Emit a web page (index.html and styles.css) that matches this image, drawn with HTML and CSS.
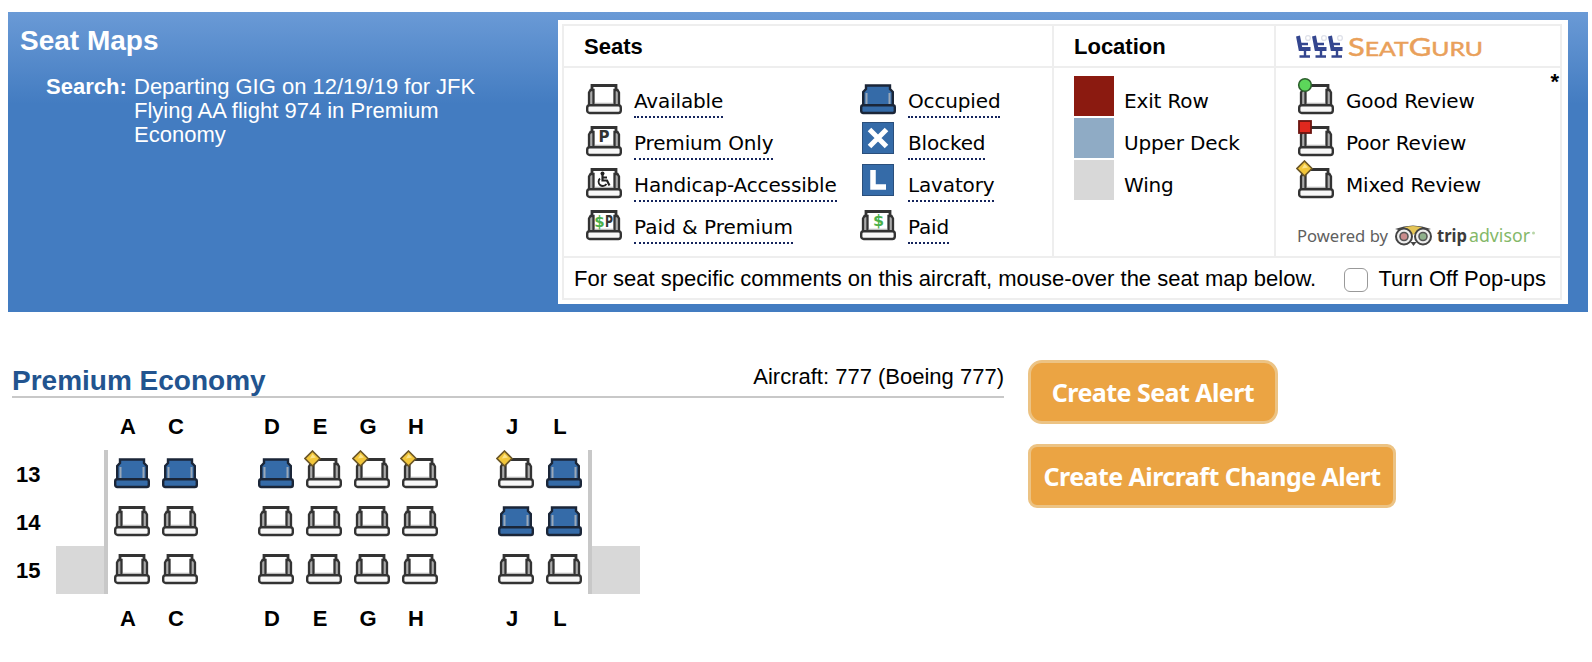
FILE: index.html
```
<!DOCTYPE html>
<html lang="en">
<head>
    <meta charset="utf-8">
    <title>Seat Maps</title>
    <link rel="stylesheet" href="styles.css">
</head>
<body>
    <!-- seat icons -->
    <svg class="sprite">
        <symbol id="seat" viewBox="0 0 40 40">
            <path d="M8 15V9.5H32V15" fill="#fff" stroke="#333" stroke-width="2.8"/>
            <rect x="10" y="11" width="20" height="19" fill="#fff"/>
            <path d="M11 27.5H29" stroke="#bbb" stroke-width="1.6"/>
            <path d="M5 30V16.5L6.500 14H9.500V28M35 30V16.500L33.500 14H30.500V28" fill="#aaa" stroke="#333" stroke-width="2.300"/>
            <rect x="3.200" y="29.200" width="33.600" height="7.800" rx="2.500" fill="#f8f8f8" stroke="#333" stroke-width="2.400"/>
        </symbol>
        <symbol id="seat-taken" viewBox="0 0 40 40">
            <path d="M5.200 30V16L8 13V9.500H32V13L34.800 16V30Z" fill="#356ba8" stroke="#1b2638" stroke-width="2.400"/>
            <path d="M8.500 17V28M31.500 17V28" stroke="#9aa8b8" stroke-width="2"/>
            <rect x="3.200" y="29.200" width="33.600" height="7.800" rx="2" fill="#356ba8" stroke="#1b2638" stroke-width="2.400"/>
        </symbol>
        <symbol id="seat-mixed" viewBox="0 0 40 40">
            <use href="#seat"/>
            <path d="M8.500 1L16 8.500L8.500 16L1 8.500Z" fill="#f2c63a" stroke="#6b5626" stroke-width="1.600"/>
            <path d="M8.500 4L12 7.500L6 8.500Z" fill="#fbe48a"/>
        </symbol>
        <symbol id="chair" viewBox="0 0 16 24">
            <path d="M2 1L4.500 14H14.500" fill="none" stroke="#34468f" stroke-width="4"/>
            <path d="M5 9H12M9 15V22M3.500 21.500H14" fill="none" stroke="#34468f" stroke-width="2.400"/>
            <circle cx="12" cy="3" r="2.400" fill="none" stroke="#e0e2ea" stroke-width="1.400"/>
        </symbol>
    </svg>

    <div class="header">
        <div class="search">
            <h1>Seat Maps</h1>
            <div class="search-row">
                <b>Search:</b>
                <p>Departing GIG on 12/19/19 for JFK Flying AA flight 974 in Premium Economy</p>
            </div>
        </div>

        <div class="legend">
            <div class="legend-grid">
                <div class="legend-head">Seats</div>
                <div class="legend-head">Location</div>
                <div class="legend-head legend-logo">
                    <svg width="196" height="38" viewBox="0 0 196 38">
                        <use href="#chair" x="0" y="7" width="16" height="24"/>
                        <use href="#chair" x="16" y="7" width="16" height="24"/>
                        <use href="#chair" x="32" y="7" width="16" height="24"/>
                        <text class="guru" x="52" y="28" textLength="135" lengthAdjust="spacingAndGlyphs"><tspan class="guru-cap">S</tspan>EAT<tspan class="guru-cap">G</tspan>URU</text>
                    </svg>
                </div>

                <div class="legend-cell seats">
                    <div class="seats-left">
                        <div class="item"><svg class="icon"><use href="#seat"/></svg><span class="label tip">Available</span></div>
                        <div class="item">
                            <svg class="icon" viewBox="0 0 40 40"><use href="#seat"/><text class="glyph" x="20" y="24" font-size="15">P</text></svg>
                            <span class="label tip">Premium Only</span>
                        </div>
                        <div class="item">
                            <svg class="icon" viewBox="0 0 40 40">
                                <use href="#seat"/>
                                <circle cx="18.500" cy="13.500" r="2" fill="#222"/>
                                <path d="M18.500 15V20.500H23L25.500 25.500M18.500 17.500H23" fill="none" stroke="#222" stroke-width="2.200"/>
                                <path d="M16 18.500A4.300 4.300 0 1 0 22.500 24" fill="none" stroke="#222" stroke-width="1.800"/>
                            </svg>
                            <span class="label tip">Handicap-Accessible</span>
                        </div>
                        <div class="item">
                            <svg class="icon" viewBox="0 0 40 40"><use href="#seat"/><text class="glyph paid" x="15.500" y="25" font-size="15">$</text><text class="glyph" x="25" y="25" font-size="15" textLength="8" lengthAdjust="spacingAndGlyphs">P</text></svg>
                            <span class="label tip wide">Paid &amp; Premium</span>
                        </div>
                    </div>
                    <div class="seats-right">
                        <div class="item"><svg class="icon"><use href="#seat-taken"/></svg><span class="label tip">Occupied</span></div>
                        <div class="item">
                            <svg class="icon" viewBox="0 0 40 40"><rect class="tile" x="4.500" y="4.500" width="31" height="31"/><path d="M11.500 11.500L28.500 28.500M28.500 11.500L11.500 28.500" stroke="#fff" stroke-width="5"/></svg>
                            <span class="label tip">Blocked</span>
                        </div>
                        <div class="item">
                            <svg class="icon" viewBox="0 0 40 40"><rect class="tile" x="4.500" y="4.500" width="31" height="31"/><path d="M15 10V27H28" fill="none" stroke="#fff" stroke-width="5.500"/></svg>
                            <span class="label tip">Lavatory</span>
                        </div>
                        <div class="item">
                            <svg class="icon" viewBox="0 0 40 40"><use href="#seat"/><text class="glyph paid" x="20.500" y="24" font-size="16">$</text></svg>
                            <span class="label tip">Paid</span>
                        </div>
                    </div>
                </div>

                <div class="legend-cell location">
                    <div class="item"><span class="swatch exit"></span><span class="label">Exit Row</span></div>
                    <div class="item"><span class="swatch deck"></span><span class="label">Upper Deck</span></div>
                    <div class="item"><span class="swatch wing-color"></span><span class="label">Wing</span></div>
                </div>

                <div class="legend-cell reviews">
                    <span class="star">*</span>
                    <div class="item">
                        <svg class="icon" viewBox="0 0 40 40"><use href="#seat"/><circle cx="9" cy="9" r="6.300" fill="#5cd65a" stroke="#2c5f2c" stroke-width="1.600"/></svg>
                        <span class="label">Good Review</span>
                    </div>
                    <div class="item">
                        <svg class="icon" viewBox="0 0 40 40"><use href="#seat"/><rect x="3" y="3" width="12" height="12" fill="#e0281e" stroke="#6b1410" stroke-width="1.800"/></svg>
                        <span class="label">Poor Review</span>
                    </div>
                    <div class="item"><svg class="icon"><use href="#seat-mixed"/></svg><span class="label">Mixed Review</span></div>
                    <svg class="powered" width="244" height="28" viewBox="0 0 244 28">
                        <text x="1" y="20" font-size="17" fill="#606060" textLength="91" lengthAdjust="spacingAndGlyphs">Powered by</text>
                        <path d="M99 7Q117 0 135 7L117 12Z" fill="#444"/>
                        <path d="M108 5.500Q117 2.500 126 5.500L117 13Z" fill="#e5c556"/>
                        <g fill="#eee" stroke="#444" stroke-width="2">
                            <circle cx="108" cy="14.500" r="8"/>
                            <circle cx="127" cy="14.500" r="8"/>
                        </g>
                        <circle cx="108" cy="14.500" r="4" fill="#c98c8c" stroke="#555" stroke-width="1.600"/>
                        <circle cx="127" cy="14.500" r="4" fill="#8fb08c" stroke="#555" stroke-width="1.600"/>
                        <path d="M114.500 20L117.500 24L120.500 20Z" fill="#444"/>
                        <text x="141" y="20" font-size="18" font-weight="700" fill="#3c3c3c" textLength="30" lengthAdjust="spacingAndGlyphs">trip</text>
                        <text x="173" y="20" font-size="18" fill="#84b868" textLength="61" lengthAdjust="spacingAndGlyphs">advisor</text>
                        <circle cx="237.500" cy="11" r="1.500" fill="#b9d6a8"/>
                    </svg>
                </div>

                <div class="legend-foot">
                    <span>For seat specific comments on this aircraft, mouse-over the seat map below.</span>
                    <label class="popups"><input type="checkbox">Turn Off Pop-ups</label>
                </div>
            </div>
        </div>
    </div>

    <div class="main">
        <div class="cabin">
            <div class="cabin-title">
                <h2>Premium Economy</h2>
                <span>Aircraft: 777 (Boeing 777)</span>
            </div>

            <div class="letters top">
                <span>A</span><span>C</span><i></i><span>D</span><span>E</span><span>G</span><span>H</span><i></i><span>J</span><span>L</span>
            </div>

            <div class="row">
                <div class="row-number">13</div>
                <div class="side"></div>
                <div class="row-seats">
                    <svg><use href="#seat-taken"/></svg>
                    <svg><use href="#seat-taken"/></svg>
                    <i></i>
                    <svg><use href="#seat-taken"/></svg>
                    <svg><use href="#seat-mixed"/></svg>
                    <svg><use href="#seat-mixed"/></svg>
                    <svg><use href="#seat-mixed"/></svg>
                    <i></i>
                    <svg><use href="#seat-mixed"/></svg>
                    <svg><use href="#seat-taken"/></svg>
                </div>
                <div class="side"></div>
            </div>
            <div class="row">
                <div class="row-number">14</div>
                <div class="side"></div>
                <div class="row-seats">
                    <svg><use href="#seat"/></svg>
                    <svg><use href="#seat"/></svg>
                    <i></i>
                    <svg><use href="#seat"/></svg>
                    <svg><use href="#seat"/></svg>
                    <svg><use href="#seat"/></svg>
                    <svg><use href="#seat"/></svg>
                    <i></i>
                    <svg><use href="#seat-taken"/></svg>
                    <svg><use href="#seat-taken"/></svg>
                </div>
                <div class="side"></div>
            </div>
            <div class="row">
                <div class="row-number">15</div>
                <div class="side wing-color"></div>
                <div class="row-seats">
                    <svg><use href="#seat"/></svg>
                    <svg><use href="#seat"/></svg>
                    <i></i>
                    <svg><use href="#seat"/></svg>
                    <svg><use href="#seat"/></svg>
                    <svg><use href="#seat"/></svg>
                    <svg><use href="#seat"/></svg>
                    <i></i>
                    <svg><use href="#seat"/></svg>
                    <svg><use href="#seat"/></svg>
                </div>
                <div class="side wing-color"></div>
            </div>

            <div class="letters bottom">
                <span>A</span><span>C</span><i></i><span>D</span><span>E</span><span>G</span><span>H</span><i></i><span>J</span><span>L</span>
            </div>
        </div>

        <div class="alerts">
            <button class="seat-alert">Create Seat Alert</button>
            <button class="aircraft-alert">Create Aircraft Change Alert</button>
        </div>
    </div>
</body>
</html>
```

FILE: styles.css
```
* {
    box-sizing: border-box;
}

body {
    margin: 12px 4px 0 8px;
    background: #fff;
    color: #000;
    font-family: Arial, "Liberation Sans", sans-serif;
    font-size: 22px;
    line-height: 24px;
}

h1, h2, p {
    margin: 0;
}

svg {
    display: block;
    flex: none;
}

.sprite {
    display: none;
}

/* header */
.header {
    display: flex;
    justify-content: space-between;
    height: 300px;
    padding: 8px 20px 8px 12px;
    background: #437cc1 linear-gradient(#6a9ad6, #437cc1) no-repeat 0 0 / 100% 92px;
}

.search {
    color: #fff;
}

.search h1 {
    font-size: 28px;
    line-height: 42px;
}

.search-row {
    display: flex;
    gap: 8px;
    margin: 13px 0 0 26px;
}

.search-row b {
    width: 80px;
}

.search-row p {
    width: 350px;
}

/* legend */
.legend {
    width: 1010px;
    height: 284px;
    padding: 4px 6px 4px 4px;
    background: #fff;
}

.legend-grid {
    display: grid;
    grid-template-columns: 490px 222px 288px;
    grid-template-rows: 42px 190px 40px;
    height: 276px;
    border: 2px solid #eee;
    border-width: 2px 0;
}

.legend-head,
.legend-cell {
    border-left: 2px solid #eee;
    border-bottom: 2px solid #eee;
}

.legend-head:nth-child(3),
.reviews {
    border-right: 2px solid #eee;
}

.legend-head {
    padding: 9px 20px 0;
    font-weight: bold;
}

.legend-cell {
    padding: 8px 18px 0 20px;
}

.seats {
    display: flex;
}

.seats-left {
    width: 274px;
}

.item {
    display: flex;
    gap: 10px;
    height: 42px;
}

.icon {
    width: 40px;
    height: 40px;
}

.label {
    height: 29px;
    margin-top: 13px;
    font-family: Verdana, "DejaVu Sans", sans-serif;
    font-size: 20px;
    letter-spacing: -0.15px;
    white-space: nowrap;
}

.wide {
    letter-spacing: 0;
}

.tip {
    border-bottom: 2px dotted #14245c;
}

.glyph {
    fill: #333;
    font-family: Verdana, "DejaVu Sans", sans-serif;
    font-weight: bold;
    text-anchor: middle;
}

.glyph.paid {
    fill: #4ab04a;
}

.tile {
    fill: #356ba8;
    stroke: #2a4f7c;
}

.swatch {
    width: 40px;
    height: 40px;
}

.exit {
    background: #8b1a10;
}

.deck {
    background: #8fabc5;
}

.wing-color {
    background: #d8d8d8;
}

.legend-logo {
    padding: 2px 0 0 20px;
}

.guru {
    fill: #e9a05a;
    stroke: #e9a05a;
    stroke-width: 0.5px;
    font-family: Lato, sans-serif;
    font-size: 20px;
    font-weight: normal;
}

.guru-cap {
    font-size: 25px;
}

.reviews {
    position: relative;
}

.star {
    position: absolute;
    top: 2px;
    right: 1px;
    font-weight: bold;
}

.powered {
    margin-top: 20px;
    font-family: "Noto Sans", sans-serif;
}

.legend-foot {
    grid-column: 1 / -1;
    display: flex;
    justify-content: space-between;
    padding: 9px 14px 0 10px;
    border: 2px solid #eee;
    border-width: 0 2px;
    white-space: nowrap;
}

.popups {
    display: flex;
    gap: 10px;
}

.popups input {
    appearance: none;
    width: 24px;
    height: 24px;
    margin: 1px 0 0;
    border: 1px solid #999;
    border-radius: 6px;
    background: #fff;
}

/* cabin */
.main {
    display: flex;
    gap: 24px;
    padding: 48px 0 0 4px;
}

.cabin {
    width: 992px;
}

.cabin-title {
    display: flex;
    justify-content: space-between;
    height: 38px;
    border-bottom: 2px solid #c8c8c8;
}

.cabin-title h2 {
    color: #22548f;
    font-size: 28px;
    line-height: 42px;
}

.cabin-title span {
    padding-top: 5px;
}

.letters {
    display: flex;
    padding-left: 96px;
    font-weight: bold;
}

.letters span {
    width: 40px;
    margin-right: 8px;
    text-align: center;
}

.letters i,
.row-seats i {
    width: 48px;
}

.top {
    height: 52px;
    padding-top: 17px;
}

.bottom {
    padding-top: 13px;
}

.row {
    display: flex;
    height: 48px;
}

.row-number {
    width: 44px;
    padding: 13px 0 0 4px;
    font-weight: bold;
}

.side {
    width: 48px;
}

.row-seats {
    display: flex;
    border: 4px solid #c8c8c8;
    border-width: 0 4px;
}

.row-seats svg {
    width: 40px;
    height: 40px;
    margin: 0 4px;
}

/* alert buttons */
.alerts {
    display: flex;
    flex-direction: column;
    align-items: flex-start;
    gap: 20px;
}

.alerts button {
    height: 64px;
    padding: 0;
    border: 3px solid #ecc384;
    border-radius: 14px;
    background: #eba443;
    color: #fff;
    font-family: "Noto Sans", sans-serif;
    font-size: 25px;
    font-weight: bold;
    letter-spacing: -0.55px;
    white-space: nowrap;
}

.alerts .seat-alert {
    width: 250px;
}

.alerts .aircraft-alert {
    width: 368px;
    border-radius: 9px;
}
```
